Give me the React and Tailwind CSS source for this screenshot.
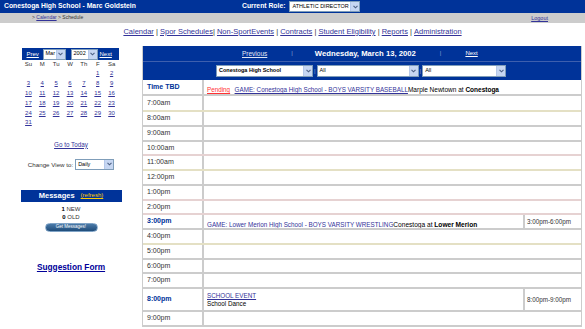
import React from "react";

const Chevron = () => (
  <svg width="5" height="4" viewBox="0 0 5 4">
    <path d="M0.5 0.8 L2.5 2.8 L4.5 0.8" fill="none" stroke="#4d6185" strokeWidth="1.1" />
  </svg>
);

const Select = ({ text, className }) => (
  <div className={`flex items-center h-[11px] bg-white border border-[#7f9db9] ${className}`}>
    <span className="flex-1 pl-[2px] text-[5.5px] leading-none text-black truncate">{text}</span>
    <span className="w-[9px] h-full bg-[#c6d6f2] border-l border-[#b5c8ea] flex items-center justify-center">
      <Chevron />
    </span>
  </div>
);

const days = ["Su", "M", "Tu", "W", "Th", "F", "Sa"];
const dates = ["", "", "", "", "", 1, 2];
for (let d = 3; d <= 31; d++) dates.push(d);

const Pending = () => (
  <span className="whitespace-nowrap">
    <span className="text-[#ff3333] underline text-[6.3px]">Pending</span>{" "}
    <span className="text-[#333399] underline text-[6.3px]">GAME: Conestoga High School - BOYS VARSITY BASEBALL</span>
    <span className="text-[6.5px] text-black">
      Marple Newtown at <b>Conestoga</b>
    </span>
  </span>
);

const Wrestling = () => (
  <span className="whitespace-nowrap">
    <span className="text-[#333399] text-[6.3px]">GAME: Lower Merion High School - BOYS VARSITY WRESTLING</span>
    <span className="text-[6.6px] text-black">
      Conestoga at <b>Lower Merion</b>
    </span>
  </span>
);

const Dance = () => (
  <div className="flex flex-col leading-[8px]">
    <span className="text-[#333399] underline text-[6.3px]">SCHOOL EVENT</span>
    <span className="text-black text-[6.3px]">School Dance</span>
  </div>
);

const rows = [
  { t: "Time TBD", bold: true, h: "h-[16px]", c: <Pending /> },
  { t: "7:00am", h: "h-[16px]", line: "border-[#e4e0c4]" },
  { t: "8:00am" },
  { t: "9:00am" },
  { t: "10:00am", line: "border-[#e6d2d2]" },
  { t: "11:00am", line: "border-[#e4e0c4]" },
  { t: "12:00pm" },
  { t: "1:00pm", line: "border-[#e6d2d2]" },
  { t: "2:00pm", line: "border-[#e6d2d2]" },
  { t: "3:00pm", bold: true, c: <Wrestling />, r: "3:00pm-6:00pm" },
  { t: "4:00pm", line: "border-[#e4e0c4]" },
  { t: "5:00pm" },
  { t: "6:00pm" },
  { t: "7:00pm" },
  { t: "8:00pm", bold: true, h: "h-[23px]", c: <Dance />, r: "8:00pm-9:00pm" },
  { t: "9:00pm", h: "h-[15px]" },
];

const Row = ({ row }) => (
  <div className={`flex border-b-2 ${row.line || "border-[#cccccc]"} ${row.h || "h-[14.75px]"}`}>
    <div
      className={`w-[61px] shrink-0 border-r-2 border-[#cccccc] pl-[4px] flex items-center text-[7px] ${
        row.bold ? "font-bold text-[#003399]" : "text-[#333333]"
      }`}
    >
      {row.t}
    </div>
    <div className="flex-1 pl-[3px] flex items-center overflow-hidden">{row.c}</div>
    {row.r && (
      <div className="w-[58px] shrink-0 border-l-2 border-[#cccccc] pl-[2px] flex items-center text-[6.3px] text-[#333333]">
        {row.r}
      </div>
    )}
  </div>
);

export default function App() {
  return (
    <div className="w-[585px] h-[329px] bg-white overflow-hidden font-['Liberation_Sans',Arial,sans-serif]">
      {/* top bar */}
      <div className="h-[13px] bg-[#003399] flex items-center text-white font-bold text-[6.8px]">
        <span className="w-[242px] pl-[4px]">Conestoga High School - Marc Goldstein</span>
        <span>Current Role:</span>
        <Select text="ATHLETIC DIRECTOR" className="ml-[4px] w-[71px] h-[10px] font-normal" />
      </div>
      <div className="h-[10px] bg-[#cccccc] flex items-center text-[5px]">
        <span className="pl-[32px] text-[#333333]">
          &gt; <span className="underline text-[#333399]">Calendar</span> &gt; Schedule
        </span>
        <span className="ml-auto mr-[37px] underline text-[#333399] text-[5.5px]">Logout</span>
      </div>
      {/* nav */}
      <div className="h-[17px] flex items-center justify-center text-[7.5px] text-[#333333] whitespace-pre">
        <span className="underline text-[#333399]">Calendar</span>
        {" | "}
        <span className="underline text-[#333399]">Spor Schedules</span>
        {"| "}
        <span className="underline text-[#333399]">Non-SportEvents</span>
        {" | "}
        <span className="underline text-[#333399]">Contracts</span>
        {" | "}
        <span className="underline text-[#333399]">Student Eligibility</span>
        {" | "}
        <span className="underline text-[#333399]">Reports</span>
        {" | "}
        <span className="underline text-[#333399]">Administration</span>
      </div>

      <div className="flex mt-[6px]">
        {/* sidebar */}
        <div className="w-[142px] shrink-0 flex flex-col items-center">
          <div className="w-[97px] mt-[2px] mr-[2px]">
            <div className="h-[12px] bg-[#003399] flex items-center text-white text-[6px]">
              <span className="underline pl-[5px] w-[18px]">Prev</span>
              <Select text="Mar" className="ml-[3px] w-[23px] h-[10px]" />
              <Select text="2002" className="ml-[5px] w-[27px] h-[10px]" />
              <span className="underline ml-[2px]">Next</span>
            </div>
            <div className="grid grid-cols-7 text-center text-[6px] text-[#333333] h-[9px] items-center">
              {days.map((d) => (
                <span key={d}>{d}</span>
              ))}
            </div>
            <div className="grid grid-cols-7 auto-rows-[9.8px] text-center text-[6px] text-[#333399]">
              {dates.map((d, i) => (
                <span key={i} className="underline flex items-center justify-center">
                  {d}
                </span>
              ))}
            </div>
          </div>
          <span className="mt-[13px] text-[6.3px] underline text-[#333399] leading-[8px]">Go to Today</span>
          <div className="mt-[10px] flex items-center text-[6.2px] text-[#333333]">
            <span>Change View to:</span>
            <Select text="Daily" className="ml-[2px] w-[39px] h-[11px]" />
          </div>
          <div className="mt-[20px] w-[101px] h-[12px] bg-[#003399] flex items-center justify-center gap-[6px]">
            <span className="text-white font-bold text-[7.5px]">Messages</span>
            <span className="text-[#ffcc00] underline text-[6px]">(refresh)</span>
          </div>
          <div className="mt-[3px] flex flex-col items-center text-[6px] leading-[8px] text-[#333333]">
            <span>
              <b className="text-black">1</b> NEW
            </span>
            <span>
              <b className="text-black">0</b> OLD
            </span>
          </div>
          <div className="mt-[2px] w-[53px] h-[9px] rounded-full bg-gradient-to-b from-[#4a7aa8] to-[#1f4d7a] border border-[#7fa3c6] flex items-center justify-center text-white text-[4.5px]">
            Get Messages!
          </div>
          <span className="mt-[29px] text-[8.3px] font-bold underline text-[#000099]">Suggestion Form</span>
        </div>

        {/* main */}
        <div className="w-[440px] shrink-0 border-l border-r border-[#cccccc]">
          <div className="h-[34px] bg-[#003399] text-white">
            <div className="h-[16px] flex items-center border-b border-[#3d5fae]">
              <span className="ml-[99px] underline text-[6.5px] text-[#e0e6f5]">Previous</span>
              <span className="ml-[24px] text-[6px] text-[#8fa3d6]">|</span>
              <span className="ml-[22px] font-bold text-[7.7px]">Wednesday, March 13, 2002</span>
              <span className="ml-[24px] text-[6px] text-[#8fa3d6]">|</span>
              <span className="ml-[24px] underline text-[6px]">Next</span>
            </div>
            <div className="h-[18px] flex items-center">
              <Select text="Conestoga High School" className="ml-[73px] w-[97px] h-[12px] font-bold" />
              <span className="mx-[1px] text-[6px] text-[#8fa3d6]">|</span>
              <Select text="All" className="w-[102px] h-[12px]" />
              <span className="mx-[1px] text-[6px] text-[#8fa3d6]">|</span>
              <Select text="All" className="w-[84px] h-[12px]" />
            </div>
          </div>
          {rows.map((row) => (
            <Row key={row.t} row={row} />
          ))}
        </div>
      </div>
    </div>
  );
}
